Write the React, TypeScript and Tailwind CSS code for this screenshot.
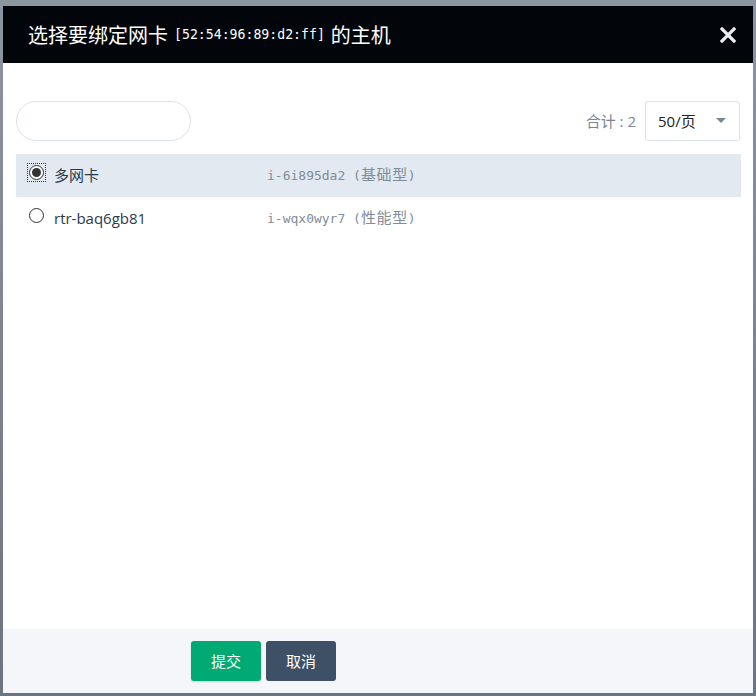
import React from "react";

const sans = { fontFamily: '"Open Sans", "Noto Sans CJK SC", sans-serif' };
const mono = { fontFamily: '"DejaVu Sans Mono", "Noto Sans CJK SC", monospace' };

function Radio({ checked }: { checked: boolean }) {
  return (
    <div className={`relative flex h-[17px] w-[17px] items-center justify-center ${checked ? "outline-1 outline-dotted outline-[#333]" : ""}`}>
      <div className="flex h-[15px] w-[15px] items-center justify-center rounded-full border border-[#333] bg-white">
        {checked && <div className="h-[9px] w-[9px] rounded-full bg-[#333]" />}
      </div>
    </div>
  );
}

export default function App() {
  const rows = [
    { name: "多网卡", id: "i-6i895da2", type: "基础型", checked: true },
    { name: "rtr-baq6gb81", id: "i-wqx0wyr7", type: "性能型", checked: false },
  ];
  return (
    <div className="h-[696px] w-[756px] bg-gradient-to-b from-[#8c96a0] to-[#6b7580] pt-[6px] pl-[3px]" style={sans}>
      <div className="flex h-[687px] w-[750px] flex-col bg-white">
        <div className="flex h-[57px] items-center justify-between bg-[#02060a] pl-[25px] pr-[17px]">
          <div className="flex items-center text-[20px] text-white" style={{ fontFamily: '"Noto Sans CJK SC", sans-serif' }}>
            <span>选择要绑定网卡</span>
            <span className="mx-[6px] text-[13.2px]" style={mono}>[52:54:96:89:d2:ff]</span>
            <span>的主机</span>
          </div>
          <svg width="16" height="16" viewBox="0 0 16 16">
            <path d="M2 2 L14 14 M14 2 L2 14" stroke="#e8eef5" strokeWidth="3.2" strokeLinecap="square" />
          </svg>
        </div>
        <div className="flex-1 px-[13px] pt-[38px]">
          <div className="flex items-center justify-between">
            <div className="h-[40px] w-[175px] rounded-full border border-[#dbe2ea]" />
            <div className="flex items-center">
              <span className="mr-[9px] text-[15px] text-[#7a8694]">合计 : 2</span>
              <div className="flex h-[40px] w-[95px] items-center justify-between rounded-[3px] border border-[#dbe2ea] pl-[12px] pr-[13px] text-[15px] text-[#222]">
                <span>50/页</span>
                <svg width="10" height="6" viewBox="0 0 10 6"><path d="M0 0 L10 0 L5 5 Z" fill="#7a8694" /></svg>
              </div>
            </div>
          </div>
          <div className="mt-[13px] w-[725px]">
            {rows.map((r) => (
              <div key={r.name} className={`flex h-[43px] items-center pl-[12px] ${r.checked ? "bg-[#e2e9f0]" : ""}`}>
                <div className={r.checked ? "-mt-[7px]" : "-mt-[6px]"}>
                  <Radio checked={r.checked} />
                </div>
                <span className="ml-[9px] w-[213px] text-[15px] text-[#2b3a4a]">{r.name}</span>
                <span className="text-[13px] text-[#7f8c99]" style={mono}>
                  {r.id} (<span className="text-[15px] tracking-[0.6px]">{r.type}</span>)
                </span>
              </div>
            ))}
          </div>
        </div>
        <div className="flex h-[64px] items-center gap-[5px] bg-[#f4f6fa] pl-[188px]">
          <button className="h-[40px] w-[70px] rounded-[3px] bg-[#00aa72] text-[15px] text-white shadow-[0_1px_2px_rgba(0,0,0,0.15)]">提交</button>
          <button className="h-[40px] w-[70px] rounded-[3px] bg-[#3d5066] text-[15px] text-white">取消</button>
        </div>
      </div>
    </div>
  );
}
